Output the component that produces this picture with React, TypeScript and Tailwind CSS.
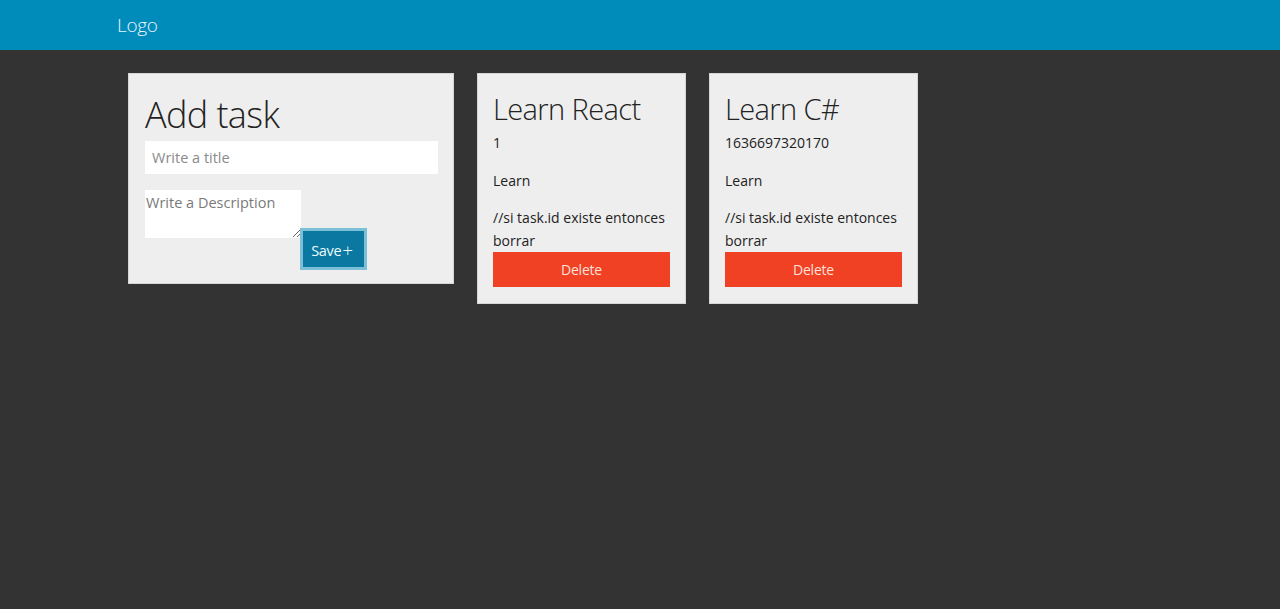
import React from 'react';

type Task = {
    id: string;
    title: string;
    description: string;
};

const TASKS: Task[] = [
    { id: '1', title: 'Learn React', description: 'Learn' },
    { id: '1636697320170', title: 'Learn C#', description: 'Learn' },
];

const FONT = "font-['Open_Sans','Noto_Sans',sans-serif]";

export default function App() {
    return (
        <div className={`min-h-[609px] bg-[#333333] ${FONT} text-[#222222]`}>
            <header className="flex h-[50px] items-center bg-[#008cba] pl-[117px]">
                <span className="text-[19px] font-light tracking-[-0.3px] text-[#e8f6ff]">Logo</span>
            </header>

            <main className="mx-auto flex w-[1024px] items-start gap-[23px] pt-[23px]">
                <AddTask />
                {TASKS.map(task => <TaskCard key={task.id} task={task} />)}
            </main>
        </div>
    );
}

function AddTask() {
    return (
        <div className="w-[326px] border border-[#d6d6d6] bg-[#eeeeee] px-4 pt-[16px] pb-[13px]">
            <h1 className="text-[36px] leading-[50px] font-light tracking-[-0.6px] text-[#222222]">Add task</h1>
            <input
                placeholder="Write a title"
                className="mt-[1px] block h-[33px] w-[293px] bg-white px-[7px] text-[14.5px] outline-none placeholder:text-[#8a8a8a]"
            />
            <div className="mt-[16px] flex items-start">
                <textarea
                    placeholder="Write a Description"
                    className="block h-[48px] w-[156px] resize-y bg-white px-[1px] py-[2px] text-[14.5px] outline-none placeholder:text-[#7a7a7a]"
                />
                <button className="mt-[38px] -ml-[1px] flex h-[42px] w-[67px] items-center justify-center border-[3px] border-[#7cc0d8] bg-[#0a78a0] pt-[3px] pr-[3px] text-[14.5px] tracking-[-0.3px] text-[#eef8fc]">
                    Save<span className="ml-[1px] text-[19px] leading-none font-light">+</span>
                </button>
            </div>
        </div>
    );
}

function TaskCard({ task }: { task: Task }) {
    return (
        <div className="w-[209px] border border-[#d6d6d6] bg-[#eeeeee] pl-[15px] pr-4 pt-[16px] pb-[16px]">
            <h2 className="text-[29px] leading-[38px] font-light tracking-[-0.6px] text-[#222222]">{task.title}</h2>
            <p className="mt-[3px] text-[14px] leading-[23px]">{task.id}</p>
            <p className="mt-[15px] text-[14px] leading-[23px]">{task.description}</p>
            <p className="mt-[14px] text-[14px] leading-[23px]">//si task.id existe entonces borrar</p>
            <button className="mt-0 block h-[35px] w-[177px] bg-[#f04124] text-[14px] tracking-[-0.2px] text-[#fde0d8]">
                Delete
            </button>
        </div>
    );
}
